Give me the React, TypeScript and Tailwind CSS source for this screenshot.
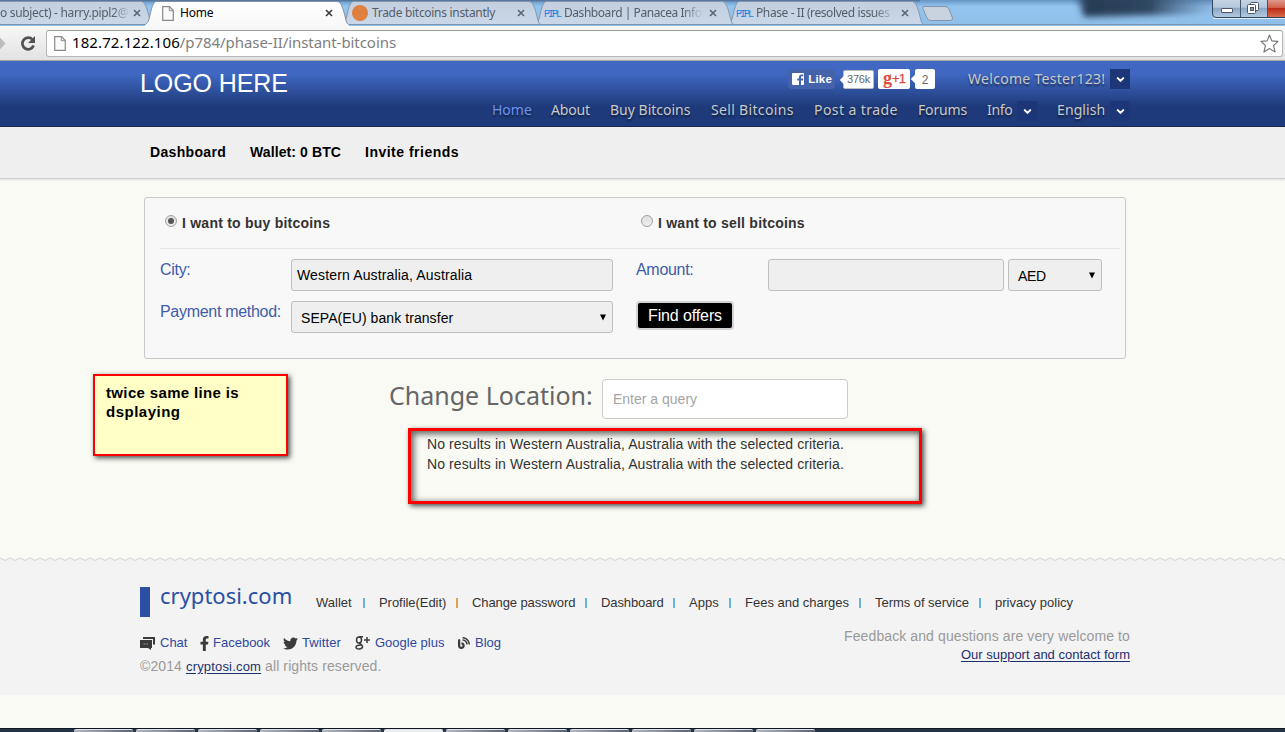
import React from "react";
import { FaFacebookF, FaTwitter, FaBlog } from "react-icons/fa";
import { ChevronDown } from "lucide-react";

const sans = "font-['Liberation_Sans',Arial,sans-serif]";
const ui = "font-['Noto_Sans',sans-serif]";

function TabStrip() {
  const tab = (x: number, w: number) =>
    `M${x} 24.5 C${x + 4} 23 ${x + 4} 18 ${x + 7} 7 C${x + 9} 2 ${x + 10} 1.5 ${x + 13} 1.5 H${x + w - 13} C${x + w - 9} 1.5 ${x + w - 8} 4 ${x + w - 6} 9 C${x + w - 3} 19 ${x + w - 3} 24 ${x + w} 24.5`;
  return (
    <svg className="absolute inset-0" width="1285" height="26" viewBox="0 0 1285 26">
      <defs>
        <linearGradient id="sky" x1="0" x2="0" y1="0" y2="1">
          <stop offset="0" stopColor="#6695c4" />
          <stop offset=".25" stopColor="#94c5f0" />
          <stop offset="1" stopColor="#8ebfe9" />
        </linearGradient>
        <linearGradient id="idle" x1="0" x2="0" y1="0" y2="1">
          <stop offset="0" stopColor="#c3cfdf" />
          <stop offset="1" stopColor="#c9d7e8" />
        </linearGradient>
        <linearGradient id="dark" x1="0" x2="1" y1="0" y2="0">
          <stop offset="0" stopColor="#1d3049" stopOpacity="0" />
          <stop offset=".08" stopColor="#263b54" />
          <stop offset=".5" stopColor="#2f4762" />
          <stop offset="1" stopColor="#5b7da6" stopOpacity="0" />
        </linearGradient>
        <linearGradient id="active" x1="0" x2="0" y1="0" y2="1">
          <stop offset="0" stopColor="#fff" />
          <stop offset="1" stopColor="#f8f8f8" />
        </linearGradient>
        <linearGradient id="glass" x1="0" x2="0" y1="0" y2="1">
          <stop offset="0" stopColor="#c7d6e6" />
          <stop offset=".45" stopColor="#b3c7dc" />
          <stop offset=".5" stopColor="#8ba6c3" />
          <stop offset="1" stopColor="#b4cde5" />
        </linearGradient>
        <linearGradient id="close" x1="0" x2="0" y1="0" y2="1">
          <stop offset="0" stopColor="#e09a8c" />
          <stop offset=".45" stopColor="#d0604c" />
          <stop offset=".5" stopColor="#bd2d17" />
          <stop offset="1" stopColor="#d86a4b" />
        </linearGradient>
        <filter id="soft" x="-10%" y="-80%" width="120%" height="260%">
          <feGaussianBlur stdDeviation="3" />
        </filter>
      </defs>
      <rect width="1285" height="26" fill="url(#sky)" />
      <path d="M1074 -6 H1225 V10 L1190 14 L1084 17Z" fill="url(#dark)" filter="url(#soft)" />
      <rect x="0" y="0" width="920" height="1.5" fill="#57779d" />
      <path d={tab(728, 196)} fill="url(#idle)" stroke="#8396ad" />
      <path d={tab(535, 199)} fill="url(#idle)" stroke="#8396ad" />
      <path d={tab(342, 199)} fill="url(#idle)" stroke="#8396ad" />
      <path d={tab(-46, 199)} fill="url(#idle)" stroke="#8396ad" />
      <path d="M0 24.5H1285" stroke="#7d95b0" />
      <path d={tab(145, 204) + " V26 H145Z"} fill="url(#active)" />
      <path d={tab(145, 204)} fill="none" stroke="#8093ab" />
      <path d="M923 6.5 H945 Q948 6.5 949 9 L952.5 18 Q953 20.5 950 20.5 H931 Q928 20.5 927 18 L923 9 Q922 6.5 924 6.5Z" fill="#c9d3df" stroke="#8495aa" />
      <path d="M1212.5 -1 V13 Q1212.5 17.5 1217 17.5 H1286 V-1Z" fill="url(#glass)" stroke="#34465b" />
      <rect x="1267" y="0" width="18" height="17" fill="url(#close)" />
      <path d="M1213 18.5H1285" stroke="#dcecfa" />
      <path d="M1240.5 0V17M1267.5 0V17" stroke="#43566c" />
      <rect x="1221.5" y="8.5" width="11" height="4" rx=".5" fill="#fff" stroke="#4e5666" />
      <rect x="1250.5" y="2.5" width="8" height="8" rx="1" fill="#fff" stroke="#4e5666" />
      <rect x="1247.5" y="4.500" width="8" height="9" rx="1" fill="#fff" stroke="#4e5666" />
      <rect x="1250.5" y="7.5" width="3" height="3" fill="#7d9ab8" stroke="#4e5666" />
    </svg>
  );
}

function Close({ active = false }: { active?: boolean }) {
  return (
    <svg width="8" height="8" viewBox="0 0 8 8" className="shrink-0">
      <path d="M1 1L7 7M7 1L1 7" stroke={active ? "#3c3c3c" : "#596472"} strokeWidth="1.6" />
    </svg>
  );
}

function PageIcon({ className }: { className?: string }) {
  return (
    <svg width="12" height="15" viewBox="0 0 12 15" className={`shrink-0 ${className ?? ""}`}>
      <path d="M.7 .7H7.5L11.3 4.500V14.300H.7Z" fill="#fafafa" stroke="#8a8a8a" strokeWidth="1.2" />
      <path d="M7.300 .7V4.700H11.300" fill="none" stroke="#8a8a8a" />
    </svg>
  );
}

function PiplIcon() {
  return (
    <span className="w-[20px] pt-[3px] font-['Liberation_Mono',monospace] text-[10px] leading-3 tracking-[-2px] text-[#2080e0]">PIPL</span>
  );
}

function Browser() {
  return (
    <div className={ui}>
      <div className="relative h-[26px]">
        <TabStrip />
        <div className="relative flex h-[26px] items-center text-[12px] text-[#555d68] whitespace-nowrap">
          <div className="flex w-[162px] items-center">
            <span className="w-[133px] tracking-[-0.32px] [mask-image:linear-gradient(to_right,#000_85%,transparent_98%)]">o subject) - harry.pipl2@</span>
            <Close />
          </div>
          <div className="flex w-[190px] items-center">
            <PageIcon />
            <span className="ml-[6px] w-[145px] tracking-[-0.2px] text-black">Home</span>
            <Close active />
          </div>
          <div className="flex w-[192px] items-center">
            <span className="size-4 rounded-full bg-[#e0803f]" />
            <span className="ml-1 w-[145px] tracking-[-0.3px]">Trade bitcoins instantly</span>
            <Close />
          </div>
          <div className="flex w-[192px] items-center">
            <PiplIcon />
            <span className="w-[145px] tracking-[-0.45px] [mask-image:linear-gradient(to_right,#000_82%,transparent_96%)]">Dashboard | Panacea Infot</span>
            <Close />
          </div>
          <div className="flex w-[192px] items-center">
            <PiplIcon />
            <span className="w-[145px] tracking-[-0.4px] [mask-image:linear-gradient(to_right,#000_82%,transparent_96%)]">Phase - II (resolved issues</span>
            <Close />
          </div>
        </div>
      </div>
      <div className="flex h-[35px] items-center border-b border-[#a5a5a5] bg-linear-to-b from-[#f8f8f8] to-[#e2e2e2]">
        <svg width="46" height="33" viewBox="0 0 46 33" className="shrink-0">
          <path d="M0 10.500L5.500 16.500L0 22.500Z" fill="#bcbcbc" />
          <path d="M32.500 12.600A5.800 5.800 0 1 0 33.600 18.500" fill="none" stroke="#525252" strokeWidth="2.700" />
          <path d="M35 9V16H28Z" fill="#525252" />
        </svg>
        <div className="flex h-[27px] w-[1237px] items-center rounded-[3px] border border-[#b5b5b5] border-t-[#9c9c9c] bg-white pr-[3px] pl-[7px]">
          <PageIcon />
          <span className="ml-[6px] flex-1 pb-px text-[15px] leading-none text-[#7e7e7e]">
            <span className="tracking-[0.1px] text-black">182.72.122.106</span><span className="tracking-[-0.06px]">/p784/phase-II/instant-bitcoins</span>
          </span>
          <svg width="19" height="19" viewBox="0 0 18 18">
            <path d="M9 1L11.200 6.500L17 7L12.800 11L14.300 17L9 13.800L3.700 17L5.200 11L1 7L6.800 6.500Z" fill="#fff" stroke="#777" strokeWidth="1.100" strokeLinejoin="round" />
          </svg>
        </div>
      </div>
    </div>
  );
}

function Caret({ className = "" }: { className?: string }) {
  return (
    <span className={`flex size-5 items-center justify-center bg-[#1d3677] text-white ${className}`}>
      <ChevronDown size={11} strokeWidth={4.5} className="mt-px" />
    </span>
  );
}

function Header() {
  return (
    <header className="flex h-[66px] justify-between border-b border-[#0c1a40] bg-linear-to-b from-[#4068c2] from-20% to-[#1e3a7a] to-70% pr-[155px] pl-[140px] whitespace-nowrap">
      <div className={`${sans} pt-2 text-[25px] leading-[29px] tracking-[-0.1px] text-white`}>LOGO HERE</div>
      <div className={`${ui} text-[14px] leading-5 text-[#c9c9c9] [text-shadow:0_2px_2px_rgba(0,0,0,.5)]`}>
        <div className={`mt-2 flex h-5 items-center justify-end ${sans} [text-shadow:none]`}>
          <div className="mr-[8px] flex items-center rounded-sm bg-[#4463ac] pr-[3px] pl-1 text-[11.500px] font-bold tracking-[0.2px] text-white">
            <svg width="12" height="12" viewBox="0 0 12 12" className="mr-1">
              <path fillRule="evenodd" d="M1 0H11Q12 0 12 1V11Q12 12 11 12H9V7.500H11L11.300 5.500H9V4.300Q9 3.300 10 3.300H11.300V1.500H9.500Q7 1.500 7 4V5.500H5.300V7.500H7V12H1Q0 12 0 11V1Q0 0 1 0Z" fill="#fff" />
            </svg>
            Like
          </div>
          <div className="relative flex h-[19px] w-[31px] items-center justify-center rounded-[2px] border border-[#bbb] bg-white text-[11px] tracking-[-0.2px] text-[#666]">
            <span className="absolute top-[6px] left-[-3px] size-[6px] rotate-45 bg-white" />
            376k
          </div>
          <div className="ml-1 flex h-5 w-8 items-center justify-center rounded-[2px] bg-white text-[#dd4b39]">
            <span className="mt-[-3px] font-['Liberation_Serif',serif] text-[18px] leading-3 font-bold">g</span>
            <span className="text-[13px] tracking-[-1px] [-webkit-text-stroke:0.3px_#dd4b39]">+1</span>
          </div>
          <div className="relative ml-[5px] flex h-5 w-5 items-center justify-center rounded-[2px] bg-white pt-px text-[12px] text-[#666]">
            <span className="absolute top-[7px] left-[-3px] size-[6px] rotate-45 bg-white" />2
          </div>
          <span className={`${ui} ml-[33px] w-[142px] tracking-[0.3px] [text-shadow:0_2px_2px_rgba(0,0,0,.5)]`}>Welcome Tester123!</span>
          <Caret />
        </div>
        <nav className="mt-3 flex h-5 items-center">
          <span className="w-[59px] pb-[2px] text-[#6d92f0]">Home</span>
          <span className="w-[59px] pb-[2px] tracking-[-0.2px]">About</span>
          <span className="w-[101px] pb-[2px]">Buy Bitcoins</span>
          <span className="w-[103px] pb-[2px] tracking-[0.33px]">Sell Bitcoins</span>
          <span className="w-[104px] pb-[2px] tracking-[0.42px]">Post a trade</span>
          <span className="w-[69px] pb-[2px] tracking-[-0.15px]">Forums</span>
          <span className="w-[30px] pb-[2px] tracking-[-0.3px]">Info</span>
          <Caret />
          <span className="ml-5 w-[53px] pb-[2px] tracking-[0.1px]">English</span>
          <Caret />
        </nav>
      </div>
    </header>
  );
}

function Radio({ on = false }: { on?: boolean }) {
  return (
    <span className="mt-[-4px] mr-[5px] flex size-3 items-center justify-center rounded-full border border-[#a0a0a0] bg-linear-to-b from-[#e0e0e0] to-[#ededed]">
      {on && <span className="size-[6px] rounded-full bg-[#555]" />}
    </span>
  );
}

function Triangle() {
  return (
    <svg width="6" height="7" viewBox="0 0 6 7">
      <path d="M0 .5H6L3 6.500Z" fill="#000" />
    </svg>
  );
}

const field = "flex h-8 items-center rounded-[3px] border border-[#bfbfbf] bg-[#efefef] text-[14px] text-black";
const label = "pt-px text-[16px] leading-5 tracking-[-0.3px] text-[#3f5ca8]";

function OfferForm() {
  return (
    <section className="ml-[144px] h-[162px] w-[982px] rounded-[3px] border border-[#c9c9c9] bg-[#f8f8f8] pl-[15px] whitespace-nowrap">
      <div className="mr-[5px] flex h-[51px] items-center border-b border-[#e4e4e4] pl-[5px] text-[14px] font-bold tracking-[0.23px] text-[#333]">
        <div className="flex w-[476px] items-center"><Radio on />I want to buy bitcoins</div>
        <div className="flex items-center"><Radio />I want to sell bitcoins</div>
      </div>
      <div className="mt-[10px] flex">
        <span className={`${label} w-[131px]`}>City:</span>
        <div className={`${field} w-[322px] pl-[5px] tracking-[0.15px]`}>Western Australia, Australia</div>
        <span className={`${label} ml-[23px] w-[132px]`}>Amount:</span>
        <div className={`${field} w-[236px]`} />
        <div className={`${field} ml-1 w-[94px] justify-between pr-[6px] pl-[9px]`}><span className="pt-[2px] tracking-[-0.3px]">AED</span><Triangle /></div>
      </div>
      <div className="mt-[10px] flex">
        <span className={`${label} w-[131px]`}>Payment method:</span>
        <div className={`${field} w-[322px] justify-between pr-[6px] pl-[9px]`}><span className="pt-[2px] tracking-[0.07px]">SEPA(EU) bank transfer</span><Triangle /></div>
        <button className="ml-[23px] h-[29px] w-[98px] rounded-[4px] border-2 border-[#d3d3d3] bg-black text-[16px] leading-[23px] tracking-[-0.12px] text-white">Find offers</button>
      </div>
    </section>
  );
}

function Results() {
  return (
    <div className="relative h-[199px] whitespace-nowrap">
      <div className="flex pt-5 pl-[389px]">
        <h2 className={`${ui} mt-[-1px] w-[213px] text-[25px] leading-[34px] text-[#666]`}>Change Location:</h2>
        <div className="flex h-10 w-[246px] items-center rounded-[4px] border border-[#ccc] bg-white pl-[10px] text-[14px] text-[#a5a5a5]">Enter a query</div>
      </div>
      <div className="mt-[15px] pl-[427px] text-[14px] leading-5 tracking-[0.09px] text-[#333]">
        <p>No results in Western Australia, Australia with the selected criteria.</p>
        <p>No results in Western Australia, Australia with the selected criteria.</p>
      </div>
      <div className="absolute top-[69px] left-[408px] h-[76px] w-[514px] border-3 border-[#f00] shadow-[2px_2px_5px_rgba(0,0,0,.7),inset_2px_2px_6px_1px_rgba(0,0,0,.6)]" />
      <div className="absolute top-[15px] left-[93px] h-[82px] w-[195px] border-2 border-[#f00] bg-[#ffffc6] pt-[7px] pl-[11px] text-[15px] leading-[19px] font-bold tracking-[0.35px] text-black shadow-[2px_2px_5px_rgba(0,0,0,.7)]">
        twice same line is<br /><span className="tracking-[0.5px]">dsplaying</span>
      </div>
    </div>
  );
}

const links: [string, string, string][] = [
  ["Wallet", "w-[47px]", "bg-[#67b3e0]"],
  ["Profile(Edit)", "w-[77px] tracking-[-0.05px]", "bg-[#e0a050]"],
  ["Change password", "w-[113px] tracking-[-0.1px]", "bg-[#67b3e0]"],
  ["Dashboard", "w-[72px] tracking-[-0.1px]", "bg-[#67b3e0]"],
  ["Apps", "w-[40px]", "bg-[#67b3e0]"],
  ["Fees and charges", "w-[114px]", "bg-[#67b3e0]"],
  ["Terms of service", "w-[104px] tracking-[-0.05px]", "bg-[#67b3e0]"],
];

function Footer() {
  return (
    <footer className="relative h-[137px] bg-[#f3f3f3] pr-[155px] pl-[140px] whitespace-nowrap">
      <svg className="absolute top-[-1px] left-0" width="1285" height="5" viewBox="0 0 1285 5">
        <defs>
          <pattern id="zig" width="10" height="5" patternUnits="userSpaceOnUse">
            <path d="M0 0H10V1L5 3.500L0 1Z" fill="#f9faf4" />
            <path d="M-1 .5L0 1L5 3.500L10 1L11 .5" fill="none" stroke="#d5d5d5" strokeWidth="1.100" />
          </pattern>
        </defs>
        <rect width="1285" height="5" fill="url(#zig)" />
      </svg>
      <div className="flex pt-[29px]">
        <span className="h-[30px] w-[10px] bg-[#2b4fa5]" />
        <span className={`${ui} mt-[-2px] ml-[10px] w-[156px] text-[22px] leading-5 text-[#2b4fa5]`}>cryptosi.com</span>
        <div className="flex h-[31px] items-center text-[13px] text-[#333]">
          {links.map(([name, width, bar]) => (
            <React.Fragment key={name}>
              <span className={width}>{name}</span>
              <span className={`${bar} mr-[14px] h-[10px] w-[2px]`} />
            </React.Fragment>
          ))}
          <span>privacy policy</span>
        </div>
      </div>
      <div className="flex justify-between">
        <div>
          <div className="mt-[15px] flex h-5 items-center text-[13px] text-[#2e47a0]">
            <svg width="15" height="13" viewBox="0 0 15 13" className="mr-[5px]">
              <path d="M3 0H15V7.500H13V2H3Z" fill="#3b3b3b" />
              <path d="M0 3H12V11H11V13L8 11H0Z" fill="#3b3b3b" />
              <path d="M3.500 7H5M5.500 7H6.500M7 7H8" stroke="#999" />
            </svg>
            <span className="w-[37px]">Chat</span>
            <FaFacebookF size={15} color="#3b3b3b" className="mr-px" />
            <span className="w-[70px]">Facebook</span>
            <FaTwitter size={15} color="#3b3b3b" className="mr-1" />
            <span className="w-[53px] tracking-[0.1px]">Twitter</span>
            <svg width="15" height="14" viewBox="0 0 15 14" className="mr-[5px]">
              <ellipse cx="4" cy="4" rx="2.500" ry="3" fill="none" stroke="#3b3b3b" strokeWidth="1.500" />
              <path d="M4 .7H8M5.500 6.800C3 7.500 8 8.500 7.500 11C7 13.500 1 13.700 1 11.300C1 9.300 4 9 6 9M9 4H15M12 1V7" fill="none" stroke="#3b3b3b" strokeWidth="1.500" />
            </svg>
            <span className="w-[83px]">Google plus</span>
            <FaBlog size={12} color="#3b3b3b" className="mr-[5px]" />
            <span>Blog</span>
          </div>
          <div className="mt-[3px] text-[14px] leading-5 tracking-[0.1px] text-[#999]">
            ©2014 <span className="text-[13px] tracking-[0.18px] text-[#1c2f70] underline underline-offset-2">cryptosi.com</span> all rights reserved.
          </div>
        </div>
        <div className="mt-[9px] text-right text-[14px] leading-[19px] text-[#999]">
          <p className="tracking-[0.1px]">Feedback and questions are very welcome to</p>
          <p className="mt-[-1px] text-[13px] text-[#1c2f70] underline underline-offset-2">Our support and contact form</p>
        </div>
      </div>
    </footer>
  );
}

const taskButtons = Array.from({ length: 12 }, (_, i) => i);

export default function App() {
  return (
    <div className={`${sans} h-[732px] w-[1285px] overflow-hidden bg-[#f9faf4]`}>
      <Browser />
      <Header />
      <div className="flex h-[52px] items-center border-b border-[#cfcfcf] bg-[#efefef] pl-[150px] text-[14px] font-bold text-black shadow-[0_1px_2px_#ddd]">
        <span className="w-[100px] tracking-[0.33px]">Dashboard</span>
        <span className="w-[115px] tracking-[0.1px]">Wallet: 0 BTC</span>
        <span className="tracking-[0.5px]">Invite friends</span>
      </div>
      <main className="pt-[18px]">
        <OfferForm />
        <Results />
      </main>
      <Footer />
      <div className="mt-[33px] flex h-1 border-t border-[#101722] bg-[#263447] pl-[74px]">
        {taskButtons.map((i) => (
          <span key={i} className={`mr-[3px] h-[3px] w-[59px] rounded-t-[2px] border-t border-[#dfe3e8] ${i === 5 ? "bg-[#eceff2]" : "bg-linear-to-r from-[#b4b9c0] to-[#596473]"}`} />
        ))}
      </div>
    </div>
  );
}
